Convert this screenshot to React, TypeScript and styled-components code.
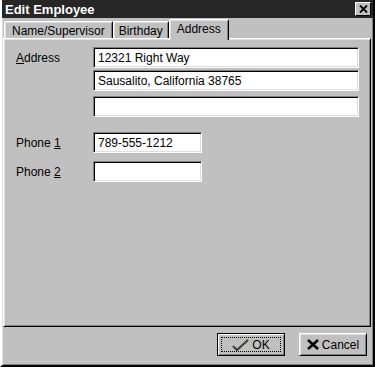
import React from 'react'
import styled, { createGlobalStyle } from 'styled-components'

const GlobalStyle = createGlobalStyle`
  html, body {
    margin: 0;
    padding: 0;
    background: #c0c0c0;
  }
  * {
    box-sizing: border-box;
  }
`

const Window = styled.div`
  width: 375px;
  height: 367px;
  background: #c0c0c0;
  border-left: 2px solid #ffffff;
  border-right: 2px solid #000000;
  border-bottom: 2px solid #000000;
  box-shadow: inset 1px 0 0 #dfdfdf, inset -1px -1px 0 #808080;
  display: flex;
  flex-direction: column;
  font-family: 'Liberation Sans', Arial, sans-serif;
  font-size: 12px;
  color: #000;
`

const TitleBar = styled.div`
  height: 18px;
  background: #262626;
  color: #ffffff;
  font-weight: bold;
  font-size: 13px;
  display: flex;
  align-items: center;
  justify-content: space-between;
  padding: 0 2px 0 3px;
`

const CloseButton = styled.div`
  width: 16px;
  height: 14px;
  background: #c0c0c0;
  border-top: 1px solid #ffffff;
  border-left: 1px solid #ffffff;
  border-right: 1px solid #000000;
  border-bottom: 1px solid #000000;
  display: flex;
  align-items: center;
  justify-content: center;
`

const TabStrip = styled.div`
  display: flex;
  align-items: flex-end;
  height: 21px;
  margin-top: 1px;
  padding-left: 2px;
  margin-bottom: -2px;
`

const Tab = styled.div<{ $active?: boolean; $pad?: string }>`
  position: relative;
  z-index: ${p => (p.$active ? 2 : 0)};
  height: ${p => (p.$active ? '21px' : '19px')};
  padding: 0 ${p => p.$pad ?? '6px'};
  padding-bottom: ${p => (p.$active ? '3px' : '1px')};
  background: #c0c0c0;
  border-top: 1px solid #ffffff;
  border-left: 1px solid #ffffff;
  border-right: 1px solid #000000;
  box-shadow: inset 1px 1px 0 #dfdfdf, inset -1px 0 0 #808080;
  border-radius: 2px 2px 0 0;
  display: flex;
  align-items: center;
  font-size: 12px;
  white-space: nowrap;
`

const Panel = styled.div`
  position: relative;
  z-index: 1;
  margin: 0 2px 0 1px;
  height: 289px;
  border-top: 1px solid #ffffff;
  border-left: 1px solid #ffffff;
  border-right: 1px solid #000000;
  border-bottom: 1px solid #000000;
  box-shadow: inset 1px 1px 0 #dfdfdf, inset -1px -1px 0 #808080;
  padding: 8px 12px 0 12px;
`

const Form = styled.div`
  display: grid;
  grid-template-columns: 77px 266px;
  align-items: center;
`

const Label = styled.div<{ $top?: number }>`
  grid-column: 1;
  margin-top: ${p => p.$top ?? 0}px;
  font-size: 12px;
`

const Field = styled.div<{ $top?: number; $width?: number }>`
  grid-column: 2;
  margin-top: ${p => p.$top ?? 0}px;
  width: ${p => p.$width ?? 266}px;
  height: 21px;
  background: #ffffff;
  border-top: 1px solid #808080;
  border-left: 1px solid #808080;
  border-right: 1px solid #ffffff;
  border-bottom: 1px solid #ffffff;
  box-shadow: inset 1px 1px 0 #000000, inset -1px -1px 0 #dfdfdf;
  padding: 0 4px;
  display: flex;
  align-items: center;
  font-size: 12px;
  white-space: nowrap;
`

const Key = styled.span`
  text-decoration: underline;
`

const Footer = styled.div`
  flex: 1;
  display: flex;
  justify-content: flex-end;
  align-items: flex-start;
  gap: 14px;
  padding: 6px 6px 0 0;
`

const Button = styled.div<{ $default?: boolean }>`
  width: 68px;
  height: 23px;
  background: #c0c0c0;
  border: 1px solid ${p => (p.$default ? '#000000' : '#ffffff')};
  border-right-color: #000000;
  border-bottom-color: #000000;
  box-shadow: ${p =>
    p.$default
      ? 'inset 1px 1px 0 #ffffff, inset -1px -1px 0 #808080'
      : 'inset 1px 1px 0 #dfdfdf, inset -1px -1px 0 #808080'};
  display: flex;
  align-items: center;
  justify-content: center;
  padding: 3px;
`

const ButtonFace = styled.div<{ $focus?: boolean }>`
  flex: 1;
  height: 100%;
  border: 1px dotted ${p => (p.$focus ? '#000000' : 'transparent')};
  display: flex;
  align-items: center;
  justify-content: center;
  gap: 3px;
  font-size: 12px;
`

const CheckIcon = () => (
  <svg width="17" height="12" viewBox="0 0 17 12">
    <path d="M1 7 L5 11 L16 1" stroke="#404040" strokeWidth="2.2" fill="none" />
  </svg>
)

const CrossIcon = () => (
  <svg width="12" height="11" viewBox="0 0 12 11">
    <path d="M1 1 L11 10 M11 1 L1 10" stroke="#000" strokeWidth="2.6" fill="none" />
  </svg>
)

export default function App() {
  return (
    <>
      <GlobalStyle />
      <Window>
        <TitleBar>
          <span>Edit Employee</span>
          <CloseButton>
            <svg width="9" height="8" viewBox="0 0 9 8">
              <path d="M1 0.5 L8 7.5 M8 0.5 L1 7.5" stroke="#000" strokeWidth="1.8" />
            </svg>
          </CloseButton>
        </TitleBar>
        <TabStrip>
          <Tab $pad="7px">Name/Supervisor</Tab>
          <Tab $pad="5px">Birthday</Tab>
          <Tab $active $pad="7px">Address</Tab>
        </TabStrip>
        <Panel>
          <Form>
            <Label>
              <Key>A</Key>ddress
            </Label>
            <Field>12321 Right Way</Field>
            <Field $top={2}>Sausalito, California 38765</Field>
            <Field $top={5} />
            <Label $top={15}>
              Phone <Key>1</Key>
            </Label>
            <Field $top={15} $width={109}>
              789-555-1212
            </Field>
            <Label $top={8}>
              Phone <Key>2</Key>
            </Label>
            <Field $top={8} $width={109} />
          </Form>
        </Panel>
        <Footer>
          <Button $default>
            <ButtonFace $focus>
              <CheckIcon />
              OK
            </ButtonFace>
          </Button>
          <Button>
            <ButtonFace>
              <CrossIcon />
              Cancel
            </ButtonFace>
          </Button>
        </Footer>
      </Window>
    </>
  )
}
